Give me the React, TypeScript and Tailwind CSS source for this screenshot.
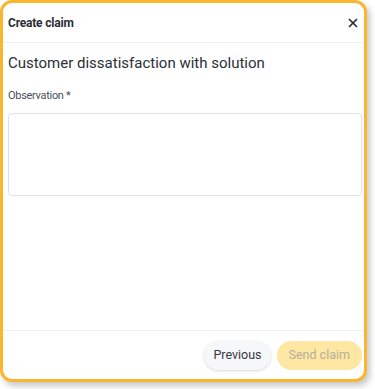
import { X } from "lucide-react";

export default function App() {
  return (
    <div className="h-[389px] w-[375px] bg-white" style={{ fontFamily: "Roboto, 'Liberation Sans', sans-serif" }}>
      <div className="flex h-[382px] w-[367px] flex-col overflow-hidden rounded-[12px] border-[3px] border-[#fbb52f] bg-white shadow-[3px_4px_6px_rgba(0,0,0,0.22)]">
        <header className="flex h-[40px] shrink-0 items-center justify-between border-b border-[#eef0f2] pl-[5px] pr-[1px]">
          <h1 className="text-[12px] font-bold tracking-[-0.2px] text-[#2b2f36]">Create claim</h1>
          <button className="flex h-5 w-5 items-center justify-center text-[#2b2f36]" aria-label="Close">
            <X size={14} strokeWidth={3} />
          </button>
        </header>

        <div className="flex flex-1 flex-col pl-[5px] pr-[2px]">
          <h2 className="mt-[10px] text-[15px] leading-[20px] text-[#2b2f36]">
            Customer dissatisfaction with solution
          </h2>
          <label className="mt-[16px] block text-[11px] leading-[14px] tracking-[-0.3px] text-[#4b5058]">
            Observation *
          </label>
          <textarea className="mt-[10px] h-[83px] w-full resize-none rounded-[4px] border border-[#dfe3e6] outline-none" />
        </div>

        <footer className="flex h-[49px] shrink-0 items-center justify-end gap-[6px] border-t border-[#eef0f2] pr-[2px]">
          <button className="h-[29px] rounded-full bg-[#f6f7f9] px-[9px] text-[12.5px] text-[#34383f] shadow-[0_1px_3px_rgba(0,0,0,0.15)]">
            Previous
          </button>
          <button className="h-[29px] rounded-full bg-[#fde7a3] px-[12px] text-[12.5px] text-[#b7ae98]">
            Send claim
          </button>
        </footer>
      </div>
    </div>
  );
}
